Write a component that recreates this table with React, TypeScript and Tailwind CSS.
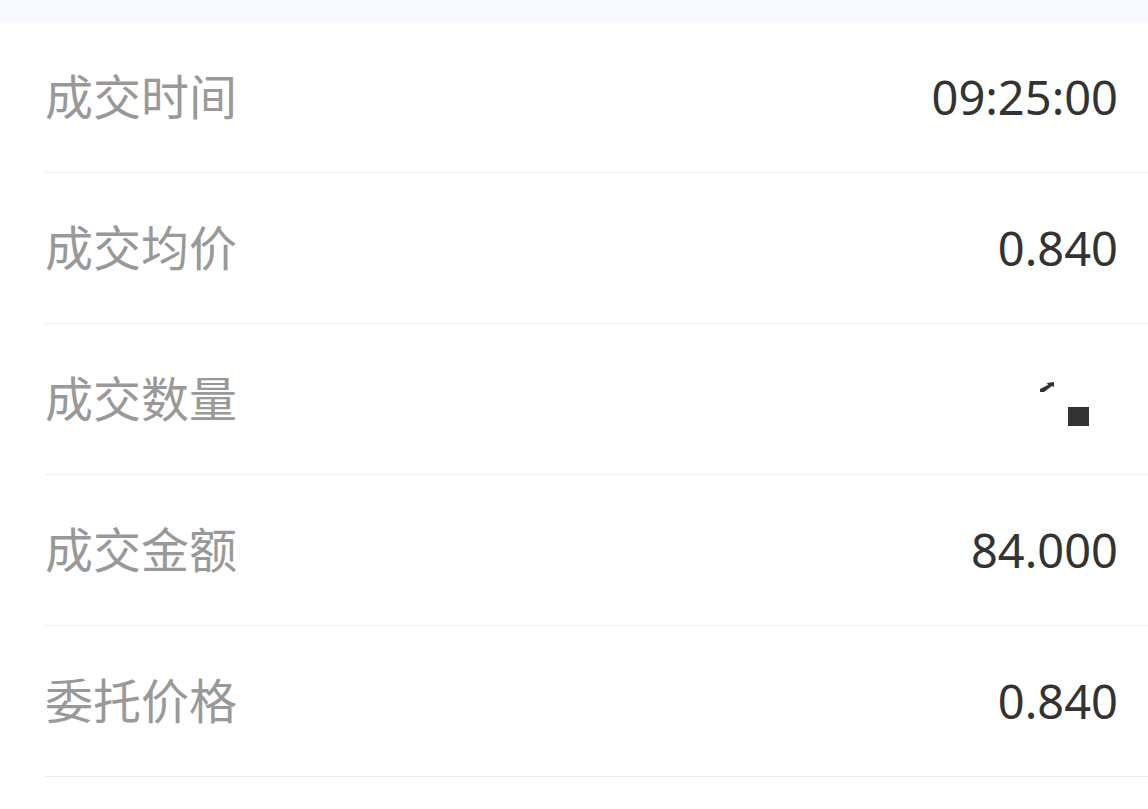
const rows = [
  { label: "成交时间", value: "09:25:00" },
  { label: "成交均价", value: "0.840" },
  { label: "成交数量", value: null },
  { label: "成交金额", value: "84.000" },
  { label: "委托价格", value: "0.840" },
]

const BrokenValue = () => (
  <svg width="60" height="60" viewBox="0 0 60 60" className="mr-[49px]">
    <path d="M1 23 L1 20 L9 16 L8 14 L15 13 L15 18 L13 17 L5 23 Z" fill="#333" />
    <rect x="29" y="38" width="21" height="19" fill="#333" />
  </svg>
)

export default function App() {
  return (
    <div className="w-[1148px] h-[809px] bg-white overflow-hidden" style={{ fontFamily: '"Noto Sans", "Noto Sans CJK SC", sans-serif' }}>
      <div className="h-[22px] bg-[#f6f9fe]" />
      <div className="pl-[45px]">
        {rows.map((row, i) => (
          <div key={i} className="flex items-center justify-between h-[151px] border-b border-[#eeeeee]">
            <div className="text-[48px] text-[#999999] leading-none">{row.label}</div>
            {row.value ? (
              <div className="pr-[30px] text-[47px] text-[#333333] leading-none">{row.value}</div>
            ) : (
              <BrokenValue />
            )}
          </div>
        ))}
      </div>
    </div>
  )
}
